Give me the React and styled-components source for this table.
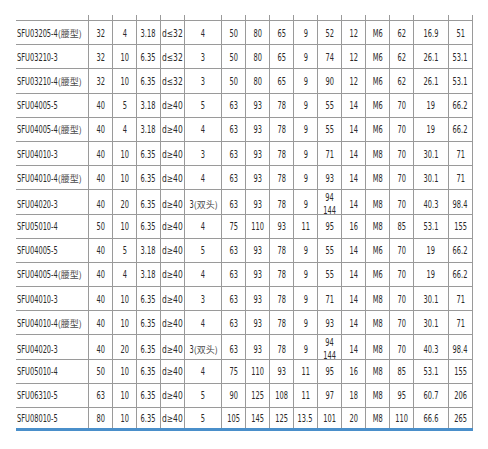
import React from 'react';
import styled, { createGlobalStyle } from 'styled-components';

const GlobalStyle = createGlobalStyle`
    body {
        margin: 0;
        background: #ffffff;
    }
`;

const COLUMNS = '73px repeat(4, 24px) 37px repeat(8, 24px) 35px 24px';

// a name is [code, note]; note is the chinese suffix
const rows = [
    [['SFU03205-4', '(腰型)'], '32', '4', '3.18', 'd≤32', '4', '50', '80', '65', '9', '52', '12', 'M6', '62', '16.9', '51'],
    [['SFU03210-3'], '32', '10', '6.35', 'd≤32', '3', '50', '80', '65', '9', '74', '12', 'M6', '62', '26.1', '53.1'],
    [['SFU03210-4', '(腰型)'], '32', '10', '6.35', 'd≤32', '3', '50', '80', '65', '9', '90', '12', 'M6', '62', '26.1', '53.1'],
    [['SFU04005-5'], '40', '5', '3.18', 'd≥40', '5', '63', '93', '78', '9', '55', '14', 'M6', '70', '19', '66.2'],
    [['SFU04005-4', '(腰型)'], '40', '4', '3.18', 'd≥40', '4', '63', '93', '78', '9', '55', '14', 'M6', '70', '19', '66.2'],
    [['SFU04010-3'], '40', '10', '6.35', 'd≥40', '3', '63', '93', '78', '9', '71', '14', 'M8', '70', '30.1', '71'],
    [['SFU04010-4', '(腰型)'], '40', '10', '6.35', 'd≥40', '4', '63', '93', '78', '9', '93', '14', 'M8', '70', '30.1', '71'],
    [['SFU04020-3'], '40', '20', '6.35', 'd≥40', ['3', '(双头)'], '63', '93', '78', '9', '94\n144', '14', 'M8', '70', '40.3', '98.4'],
    [['SFU05010-4'], '50', '10', '6.35', 'd≥40', '4', '75', '110', '93', '11', '95', '16', 'M8', '85', '53.1', '155'],
    [['SFU04005-5'], '40', '5', '3.18', 'd≥40', '5', '63', '93', '78', '9', '55', '14', 'M6', '70', '19', '66.2'],
    [['SFU04005-4', '(腰型)'], '40', '4', '3.18', 'd≥40', '4', '63', '93', '78', '9', '55', '14', 'M6', '70', '19', '66.2'],
    [['SFU04010-3'], '40', '10', '6.35', 'd≥40', '3', '63', '93', '78', '9', '71', '14', 'M8', '70', '30.1', '71'],
    [['SFU04010-4', '(腰型)'], '40', '10', '6.35', 'd≥40', '4', '63', '93', '78', '9', '93', '14', 'M8', '70', '30.1', '71'],
    [['SFU04020-3'], '40', '20', '6.35', 'd≥40', ['3', '(双头)'], '63', '93', '78', '9', '94\n144', '14', 'M8', '70', '40.3', '98.4'],
    [['SFU05010-4'], '50', '10', '6.35', 'd≥40', '4', '75', '110', '93', '11', '95', '16', 'M8', '85', '53.1', '155'],
    [['SFU06310-5'], '63', '10', '6.35', 'd≥40', '5', '90', '125', '108', '11', '97', '18', 'M8', '95', '60.7', '206'],
    [['SFU08010-5'], '80', '10', '6.35', 'd≥40', '5', '105', '145', '125', '13.5', '101', '20', 'M8', '110', '66.6', '265'],
];

const Page = styled.div`
    padding: 15px 0 0 16px;
    color: #2a2a2a;
`;

const Table = styled.div`
    display: flex;
    flex-direction: column;
    width: 457px;
`;

const Row = styled.div`
    display: grid;
    grid-template-columns: ${COLUMNS};
    box-sizing: border-box;
    height: ${p => (p.$stub ? '5px' : '24.2px')};
    border-top: ${p => (p.$stub ? 'none' : '1px solid #9a9a9a')};
    border-bottom: ${p => (p.$last ? '3px solid #4a8fca' : 'none')};
`;

const Cell = styled.div`
    box-sizing: border-box;
    display: flex;
    align-items: center;
    justify-content: ${p => (p.$name ? 'flex-start' : 'center')};
    padding-left: ${p => (p.$name ? '1px' : '0')};
    padding-top: 1px;
    border-right: 1px solid #9a9a9a;
    white-space: nowrap;
`;

// the source font is very narrow, so a condensed face is squeezed a bit more
const Narrow = styled.span`
    display: inline-block;
    font-family: "DejaVu Sans Condensed", "DejaVu Sans", sans-serif;
    font-size: 10px;
    line-height: 13px;
    text-align: center;
    white-space: pre-line;
    transform: scaleX(${p => p.$scale || 0.74});
    transform-origin: ${p => p.$origin || 'center'};
    margin-right: ${p => p.$trim || '0'};
`;

const Note = styled.span`
    font-family: "Noto Sans CJK SC", sans-serif;
    font-size: 9px;
    line-height: 13px;
    color: #4a4a4a;
`;

function Value({ value, name }) {
    if (Array.isArray(value)) {
        const [main, note] = value;
        return (
            <>
                <Narrow
                    $origin={name ? 'left center' : 'right center'}
                    $trim={name ? '-14.3px' : '0'}
                >
                    {main}
                </Narrow>
                {note && <Note>{note}</Note>}
            </>
        );
    }
    const compare = value.startsWith('d');
    return <Narrow $scale={compare ? 0.84 : undefined}>{value}</Narrow>;
}

export default function App() {
    return (
        <>
            <GlobalStyle />
            <Page>
                <Table>
                    <Row $stub>
                        {rows[0].map((_, i) => (
                            <Cell key={i} $name={i === 0} />
                        ))}
                    </Row>
                    {rows.map((row, r) => (
                        <Row key={r} $last={r === rows.length - 1}>
                            {row.map((value, i) => (
                                <Cell key={i} $name={i === 0}>
                                    <Value value={value} name={i === 0} />
                                </Cell>
                            ))}
                        </Row>
                    ))}
                </Table>
            </Page>
        </>
    );
}
